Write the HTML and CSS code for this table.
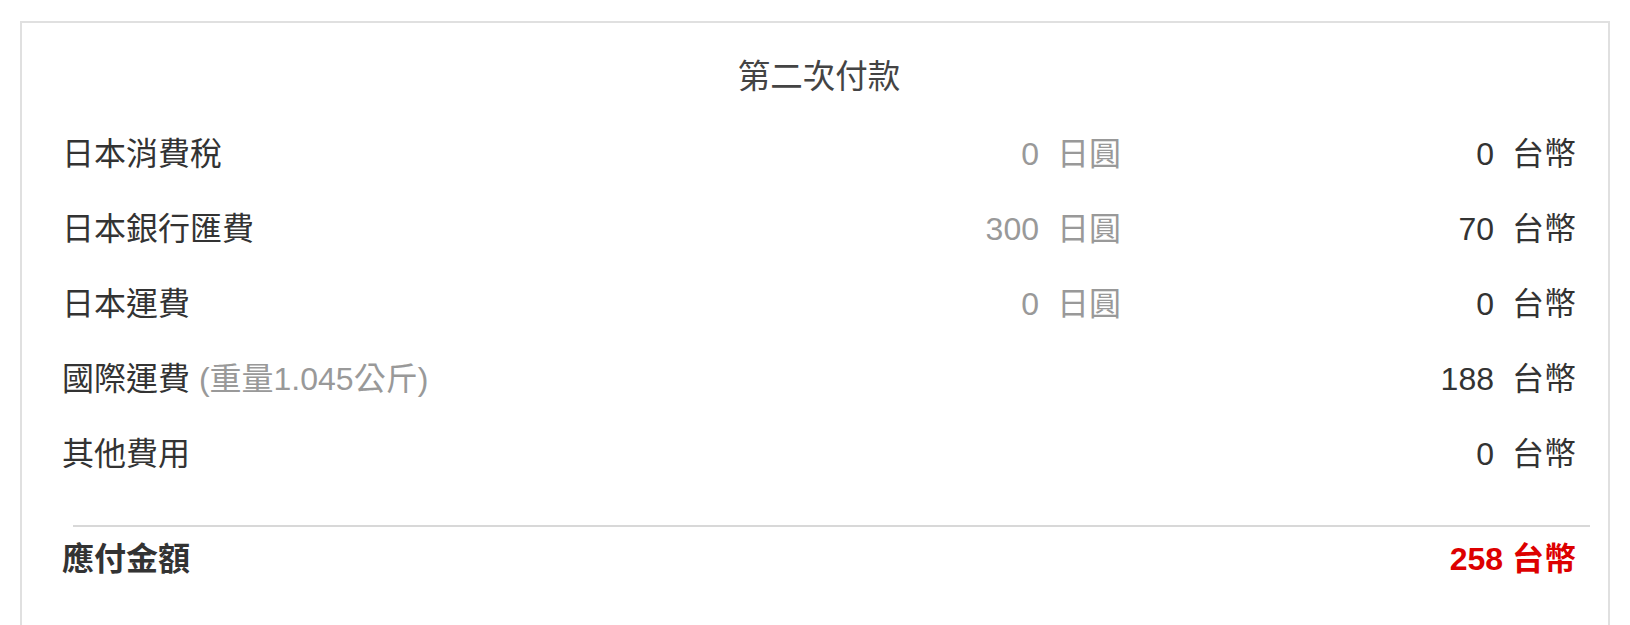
FILE: index.html
```html
<!DOCTYPE html>
<html lang="zh-Hant">
  <head>
    <meta charset="UTF-8" />
    <meta name="viewport" content="width=device-width, initial-scale=1.0" />
    <title>第二次付款</title>
    <link rel="stylesheet" href="styles.css">
  </head>
  <body>
    <div class="container">
      <div class="pay-card">
        <h2 class="pay-title">第二次付款</h2>
        <div class="rows">
          <div class="row">
            <div class="label">日本消費稅</div>
            <div class="amount jpy"><span class="num">0</span><span class="unit">日圓</span></div>
            <div class="amount twd"><span class="num">0</span><span class="unit">台幣</span></div>
          </div>
          <div class="row">
            <div class="label">日本銀行匯費</div>
            <div class="amount jpy"><span class="num">300</span><span class="unit">日圓</span></div>
            <div class="amount twd"><span class="num">70</span><span class="unit">台幣</span></div>
          </div>
          <div class="row">
            <div class="label">日本運費</div>
            <div class="amount jpy"><span class="num">0</span><span class="unit">日圓</span></div>
            <div class="amount twd"><span class="num">0</span><span class="unit">台幣</span></div>
          </div>
          <div class="row">
            <div class="label">國際運費 <span class="note">(重量1.045公斤)</span></div>
            <div class="amount jpy"></div>
            <div class="amount twd"><span class="num">188</span><span class="unit">台幣</span></div>
          </div>
          <div class="row">
            <div class="label">其他費用</div>
            <div class="amount jpy"></div>
            <div class="amount twd"><span class="num">0</span><span class="unit">台幣</span></div>
          </div>
        </div>
        <hr class="divider" />
        <div class="rows">
          <div class="row total">
            <div class="label">應付金額</div>
            <div class="amount jpy"></div>
            <div class="amount twd">258 台幣</div>
          </div>
        </div>
      </div>
    </div>
  </body>
</html>
```

FILE: styles.css
```css
* {
  margin: 0;
  padding: 0;
  box-sizing: border-box;
  font-family: "Liberation Sans", "Noto Sans CJK TC", sans-serif;
}

body {
  background: #fff;
  color: #333;
}

.container {
  padding: 21px 20px 0;
}

.pay-card {
  border: 2px solid #e0e0e0;
  min-height: 700px;
  padding-top: 18px;
}

.pay-title {
  font-size: 32.5px;
  font-weight: normal;
  color: #444;
  text-align: center;
  line-height: 40px;
  padding: 16px 0 19px 8px;
}

.rows {
  padding: 0 32px 0 40px;
}

.row {
  display: grid;
  grid-template-columns: 1fr 400px 455px;
  align-items: center;
  height: 75px;
  font-size: 32px;
  line-height: 40px;
}

.label {
  color: #333;
}

.note {
  color: #999;
}

.amount {
  display: flex;
  justify-content: flex-end;
  align-items: baseline;
  gap: 18px;
}

.jpy {
  color: #999;
}

.twd {
  color: #333;
}

.divider {
  border: none;
  border-top: 2px solid #d8d8d8;
  margin: 34px 18px 0 51px;
}

.row.total {
  height: 64px;
  font-weight: bold;
}

.row.total .twd {
  color: #dd0000;
}
```
